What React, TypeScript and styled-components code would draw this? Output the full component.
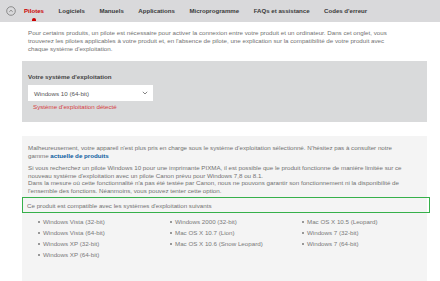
import React from "react";
import styled, { createGlobalStyle } from "styled-components";

const Global = createGlobalStyle`
  html, body { margin: 0; padding: 0; background: #ffffff; }
  body { font-family: "Liberation Sans", Arial, sans-serif; overflow: hidden; }
  * { box-sizing: border-box; }
`;

const Page = styled.div`
  width: 440px;
  height: 281px;
  overflow: hidden;
`;

const Nav = styled.nav`
  height: 22px;
  background: #d9d9db;
  display: flex;
  align-items: center;
  padding-left: 6px;
`;

const CollapseButton = styled.span`
  width: 10px;
  height: 10px;
  display: flex;
  align-items: center;
  justify-content: center;
  margin-right: 8px;
`;

const Tabs = styled.div`
  display: flex;
  align-items: center;
  gap: 14.5px;
`;

const Tab = styled.span<{ $active?: boolean }>`
  position: relative;
  font-size: 6.1px;
  font-weight: bold;
  color: ${(p) => (p.$active ? "#cc0000" : "#3a3a3a")};
  line-height: 8px;
  white-space: nowrap;
`;

const Indicator = styled.span`
  position: absolute;
  left: 8px;
  top: 11px;
  width: 4px;
  height: 3px;
  background: #cc0000;
  border-radius: 2px 2px 0 0;
`;

const Main = styled.main`
  padding: 7px 13px 0 22px;
`;

const Intro = styled.p`
  margin: 0 0 8px;
  padding-left: 6px;
  font-size: 6.2px;
  line-height: 8px;
  color: #727272;
  white-space: nowrap;
`;

const OsPanel = styled.section`
  background: #d9dadb;
  padding: 12px 6px 11px 6px;
`;

const Label = styled.div`
  font-size: 6.2px;
  line-height: 8px;
  color: #444;
  font-weight: bold;
`;

const Select = styled.div`
  margin-top: 4px;
  width: 125px;
  height: 16px;
  background: #fff;
  display: flex;
  align-items: center;
  justify-content: space-between;
  padding: 0 5px 0 6px;
  font-size: 6.2px;
  color: #555;
`;

const Detected = styled.div`
  margin-top: 2px;
  padding-left: 5px;
  font-size: 6.2px;
  line-height: 8px;
  color: #d63a3f;
`;

const InfoPanel = styled.section`
  margin-top: 14px;
  background: #f4f4f4;
  padding: 8px 0 40px 0;
`;

const InfoText = styled.p`
  margin: 0;
  padding-left: 6px;
  font-size: 6.2px;
  line-height: 7.5px;
  color: #727272;
  white-space: nowrap;
  & + & { margin-top: 5px; }
`;

const Link = styled.a`
  color: #0b5c9e;
  font-weight: bold;
  text-decoration: none;
`;

const Compat = styled.div`
  margin: 3px -3px 0 0;
  height: 16px;
  border: 1.5px solid #36b04a;
  display: flex;
  align-items: center;
  padding-left: 4px;
  font-size: 6.2px;
  color: #727272;
`;

const Columns = styled.div`
  display: grid;
  grid-template-columns: 132px 132px 132px;
  padding: 3px 0 0 14px;
`;

const List = styled.ul`
  margin: 0;
  padding: 0;
  list-style: none;
`;

const Item = styled.li`
  display: flex;
  align-items: center;
  height: 11px;
  font-size: 6.2px;
  color: #7a7a7a;
  white-space: nowrap;
  &::before {
    content: "";
    width: 2px;
    height: 2px;
    border-radius: 50%;
    background: #7a7a7a;
    margin: 0 3px 0 2px;
  }
`;

const columns = [
  ["Windows Vista (32-bit)", "Windows Vista (64-bit)", "Windows XP (32-bit)", "Windows XP (64-bit)"],
  ["Windows 2000 (32-bit)", "Mac OS X 10.7 (Lion)", "Mac OS X 10.6 (Snow Leopard)"],
  ["Mac OS X 10.5 (Leopard)", "Windows 7 (32-bit)", "Windows 7 (64-bit)"],
];

const tabs = ["Pilotes", "Logiciels", "Manuels", "Applications", "Microprogramme", "FAQs et assistance", "Codes d'erreur"];

export default function App() {
  return (
    <Page>
      <Global />
      <Nav>
        <CollapseButton>
          <svg width="10" height="10" viewBox="0 0 10 10">
            <circle cx="5" cy="5" r="4.3" fill="none" stroke="#777" strokeWidth="0.8" />
            <path d="M3.3 5.8 L5 4.2 L6.7 5.8" fill="none" stroke="#777" strokeWidth="0.8" />
          </svg>
        </CollapseButton>
        <Tabs>
          {tabs.map((t, i) => (
            <Tab key={t} $active={i === 0}>
              {t}
              {i === 0 && <Indicator />}
            </Tab>
          ))}
        </Tabs>
      </Nav>
      <Main>
        <Intro>
          Pour certains produits, un pilote est nécessaire pour activer la connexion entre votre produit et un ordinateur. Dans cet onglet, vous
          <br />
          trouverez les pilotes applicables à votre produit et, en l'absence de pilote, une explication sur la compatibilité de votre produit avec
          <br />
          chaque système d'exploitation.
        </Intro>
        <OsPanel>
          <Label>Votre système d'exploitation</Label>
          <Select>
            <span>Windows 10 (64-bit)</span>
            <svg width="6" height="4" viewBox="0 0 6 4">
              <path d="M0.8 0.8 L3 3 L5.2 0.8" fill="none" stroke="#666" strokeWidth="0.8" />
            </svg>
          </Select>
          <Detected>Système d'exploitation détecté</Detected>
        </OsPanel>
        <InfoPanel>
          <InfoText>
            Malheureusement, votre appareil n'est plus pris en charge sous le système d'exploitation sélectionné. N'hésitez pas à consulter notre
            <br />
            gamme <Link href="#">actuelle de produits</Link>
          </InfoText>
          <InfoText>
            Si vous recherchez un pilote Windows 10 pour une imprimante PIXMA, il est possible que le produit fonctionne de manière limitée sur ce
            <br />
            nouveau système d'exploitation avec un pilote Canon prévu pour Windows 7,8 ou 8.1.
            <br />
            Dans la mesure où cette fonctionnalité n'a pas été testée par Canon, nous ne pouvons garantir son fonctionnement ni la disponibilité de
            <br />
            l'ensemble des fonctions. Néanmoins, vous pouvez tenter cette option.
          </InfoText>
          <Compat>Ce produit est compatible avec les systèmes d'exploitation suivants</Compat>
          <Columns>
            {columns.map((col, i) => (
              <List key={i}>
                {col.map((it) => (
                  <Item key={it}>{it}</Item>
                ))}
              </List>
            ))}
          </Columns>
        </InfoPanel>
      </Main>
    </Page>
  );
}
